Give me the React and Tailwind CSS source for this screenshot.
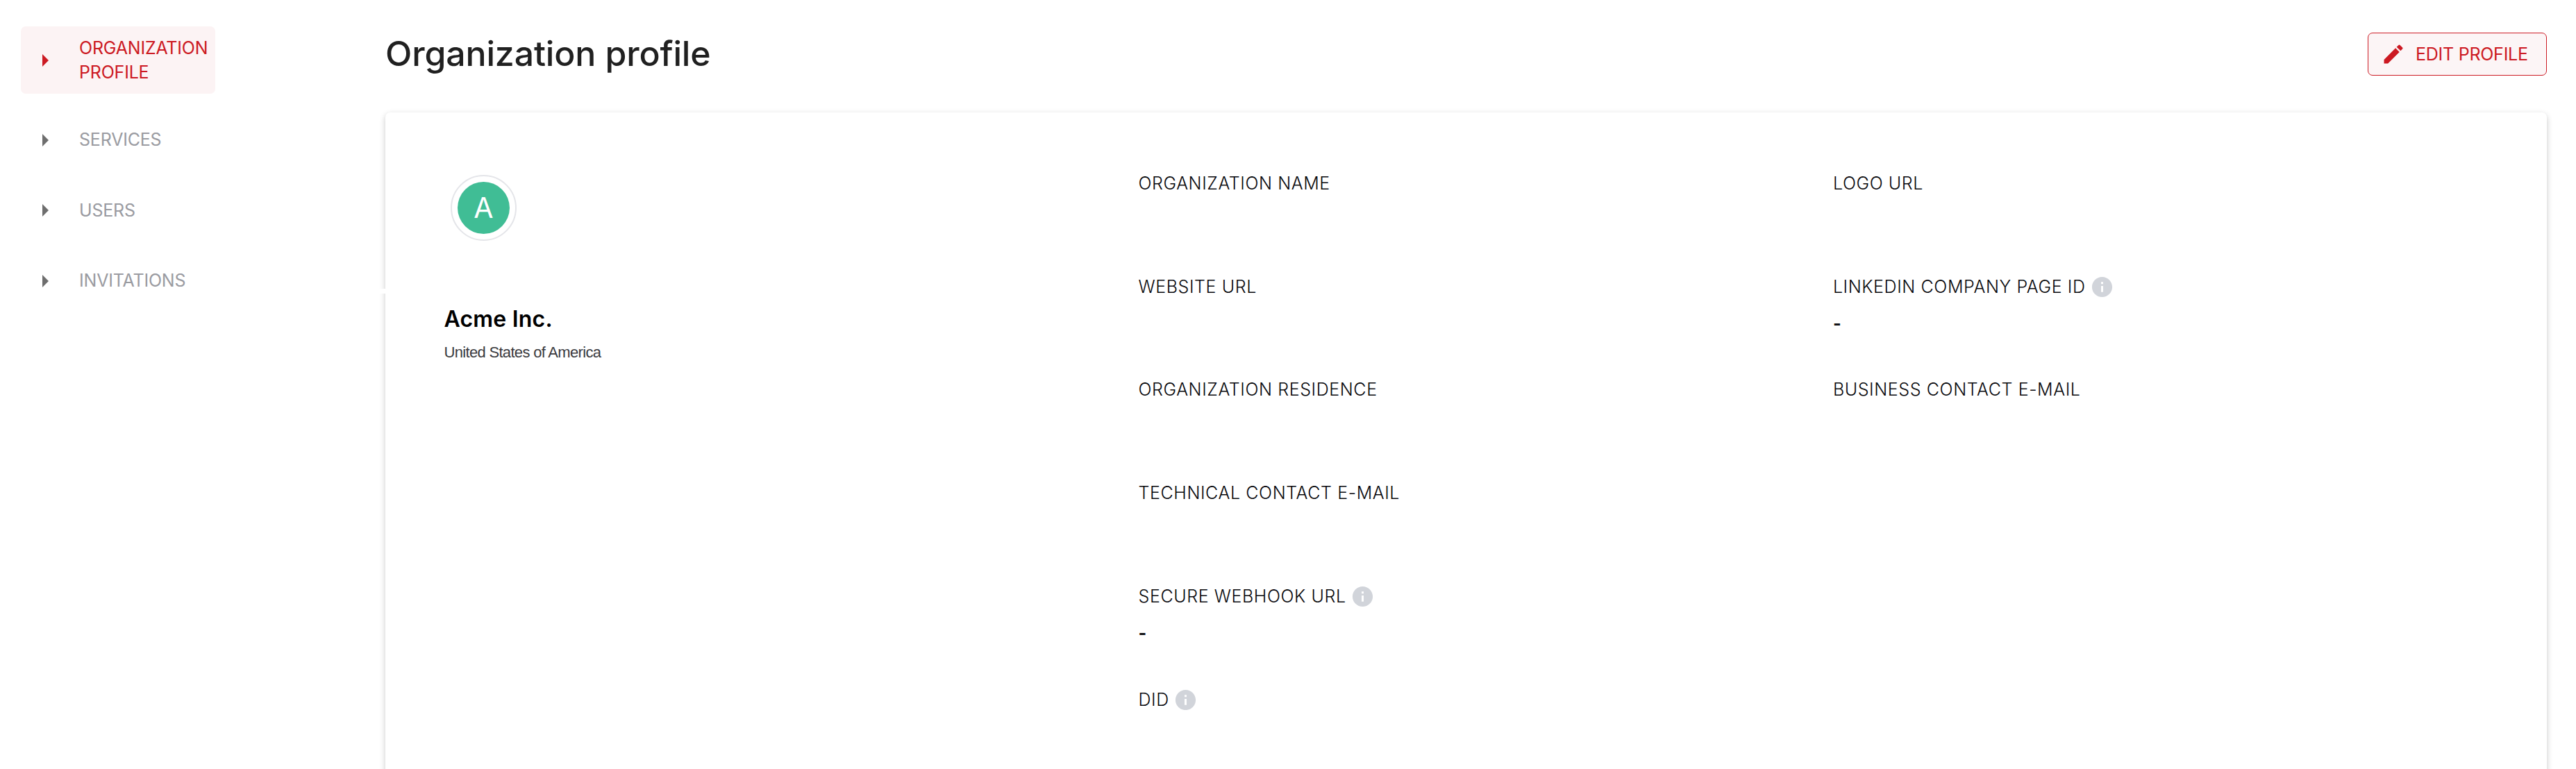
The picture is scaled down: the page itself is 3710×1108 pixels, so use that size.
const NAV = [
  { label: 'SERVICES' },
  { label: 'USERS' },
  { label: 'INVITATIONS' },
];

const LEFT_FIELDS = [
  { label: 'ORGANIZATION NAME' },
  { label: 'WEBSITE URL' },
  { label: 'ORGANIZATION RESIDENCE' },
  { label: 'TECHNICAL CONTACT E-MAIL' },
  { label: 'SECURE WEBHOOK URL', info: true, value: '-' },
  { label: 'DID', info: true },
];

const RIGHT_FIELDS = [
  { label: 'LOGO URL' },
  { label: 'LINKEDIN COMPANY PAGE ID', info: true, value: '-' },
  { label: 'BUSINESS CONTACT E-MAIL' },
];

function Arrow() {
  return (
    <svg className="h-[18px] w-[9px] shrink-0" viewBox="0 0 5 10" fill="currentColor" preserveAspectRatio="none">
      <path d="m0 10 5-5-5-5z" />
    </svg>
  );
}

function InfoIcon() {
  return (
    <svg className="h-[35px] w-[35px] shrink-0 text-[#d1d4da]" viewBox="0 0 24 24" fill="currentColor">
      <path d="M12 2C6.48 2 2 6.48 2 12s4.48 10 10 10 10-4.48 10-10S17.52 2 12 2zm1 15h-2v-6h2v6zm0-8h-2V7h2v2z" />
    </svg>
  );
}

function EditIcon() {
  return (
    <svg className="h-9 w-9 shrink-0" viewBox="0 0 24 24" fill="currentColor">
      <path d="M3 17.25V21h3.75L17.81 9.94l-3.75-3.75L3 17.25zM20.71 7.04c.39-.39.39-1.02 0-1.41l-2.34-2.34a.9959.9959 0 0 0-1.41 0l-1.83 1.83 3.75 3.75 1.83-1.83z" />
    </svg>
  );
}

function Fields({ items }) {
  return (
    <dl className="flex flex-col">
      {items.map((f) => (
        <div key={f.label} className="h-[148.8px]">
          <dt className="flex h-[35px] items-center gap-[6px] whitespace-nowrap text-[25px] font-light leading-[35px] tracking-[0.6px] text-[#08080c]">
            <span>{f.label}</span>
            {f.info && <InfoIcon />}
          </dt>
          {f.value && (
            <dd className="mt-[18.5px] text-[25px] font-bold leading-[35px] text-[#131317]">{f.value}</dd>
          )}
        </div>
      ))}
    </dl>
  );
}

export default function App() {
  return (
    <div className="flex h-[1108px] w-[3710px] overflow-hidden bg-white font-['Inter',sans-serif]">
      <aside className="w-[555px] shrink-0 pl-[30px] pt-[38px]">
        <nav className="flex w-[280px] flex-col text-[25px] leading-[35px] tracking-[-0.2px]">
          <a className="flex h-[97px] items-center gap-11 rounded-[7px] bg-[#fcf3f4] pl-[31px] text-[#cc1922]">
            <Arrow />
            <span>ORGANIZATION PROFILE</span>
          </a>
          <div className="mt-4 flex flex-col">
            {NAV.map((n) => (
              <a key={n.label} className="flex h-[101.5px] items-center gap-11 pl-[31px] text-[#9a9ba1]">
                <span className="flex text-[#6e6e6e]">
                  <Arrow />
                </span>
                <span>{n.label}</span>
              </a>
            ))}
          </div>
        </nav>
      </aside>

      <main className="w-[3113px] shrink-0">
        <header className="flex h-[162px] items-start justify-between pt-[47px]">
          <h1 className="-mt-px text-[50px] font-medium leading-[62px] tracking-[-0.15px] text-[#202020]">
            Organization profile
          </h1>
          <button className="flex h-[62px] w-[258px] items-center gap-[14px] rounded-[7px] border border-[#cc1922] bg-[#fcf5f6] pl-[18px] text-[25px] tracking-[-0.25px] text-[#cc1922]">
            <EditIcon />
            <span className="pt-px">EDIT PROFILE</span>
          </button>
        </header>

        <section className="relative h-[1000px] rounded-[7px] bg-white shadow-[0_3px_8px_rgba(0,0,0,0.22)]">
          <div className="absolute -left-3 top-[254px] h-[7px] w-3 bg-white" />
          <div className="grid grid-cols-[1000px_1000.4px_1fr] pl-[84.5px] pt-[84.8px]">
            <div className="pt-[5px]">
              <div className="ml-[9.5px] flex h-[95px] w-[95px] items-center justify-center rounded-full border-2 border-[#e4e5e9]">
                <div className="flex h-[75px] w-[75px] items-center justify-center rounded-full bg-[#40bd95] text-[41px] leading-none text-white">
                  A
                </div>
              </div>
              <h2 className="mt-[93px] text-[32px] font-semibold leading-10 tracking-[0.2px] text-black">Acme Inc.</h2>
              <p className="mt-[14px] font-['Liberation_Sans',sans-serif] text-[22px] leading-7 tracking-[-0.68px] text-[#3a3a3e]">
                United States of America
              </p>
            </div>
            <Fields items={LEFT_FIELDS} />
            <Fields items={RIGHT_FIELDS} />
          </div>
        </section>
      </main>
    </div>
  );
}
